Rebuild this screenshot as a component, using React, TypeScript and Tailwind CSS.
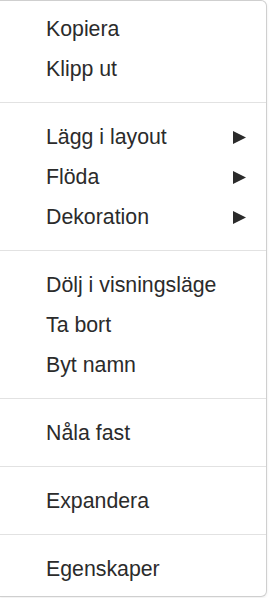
const groups: { label: string; submenu?: boolean }[][] = [
  [{ label: 'Kopiera' }, { label: 'Klipp ut' }],
  [
    { label: 'Lägg i layout', submenu: true },
    { label: 'Flöda', submenu: true },
    { label: 'Dekoration', submenu: true },
  ],
  [{ label: 'Dölj i visningsläge' }, { label: 'Ta bort' }, { label: 'Byt namn' }],
  [{ label: 'Nåla fast' }],
  [{ label: 'Expandera' }],
  [{ label: 'Egenskaper' }],
];

function Arrow() {
  return (
    <svg width="13" height="13" viewBox="0 0 13 13" className="fill-[#2b2b2b]">
      <path d="M0 0 L13 6.5 L0 13 Z" />
    </svg>
  );
}

export default function App() {
  return (
    <div className="h-[598px] w-[270px] bg-white font-['Liberation_Sans',Arial,sans-serif]">
      <div className="flex h-[597px] w-[267px] flex-col rounded-r-[6px] border-y border-r border-[#cfcfcf] bg-white pt-2 pb-[7px] shadow-[0_1px_3px_rgba(0,0,0,0.08)]">
        {groups.map((group, gi) => (
          <div key={gi}>
            {gi > 0 && <div className="mt-[13px] mb-[14px] h-px bg-[#e2e2e2]" />}
            {group.map((item) => (
              <div
                key={item.label}
                className="flex h-10 items-center justify-between pl-[46px] pr-5 text-[21.3px] leading-10 text-[#2b2b2b]"
              >
                <span>{item.label}</span>
                {item.submenu && <Arrow />}
              </div>
            ))}
          </div>
        ))}
      </div>
    </div>
  );
}
